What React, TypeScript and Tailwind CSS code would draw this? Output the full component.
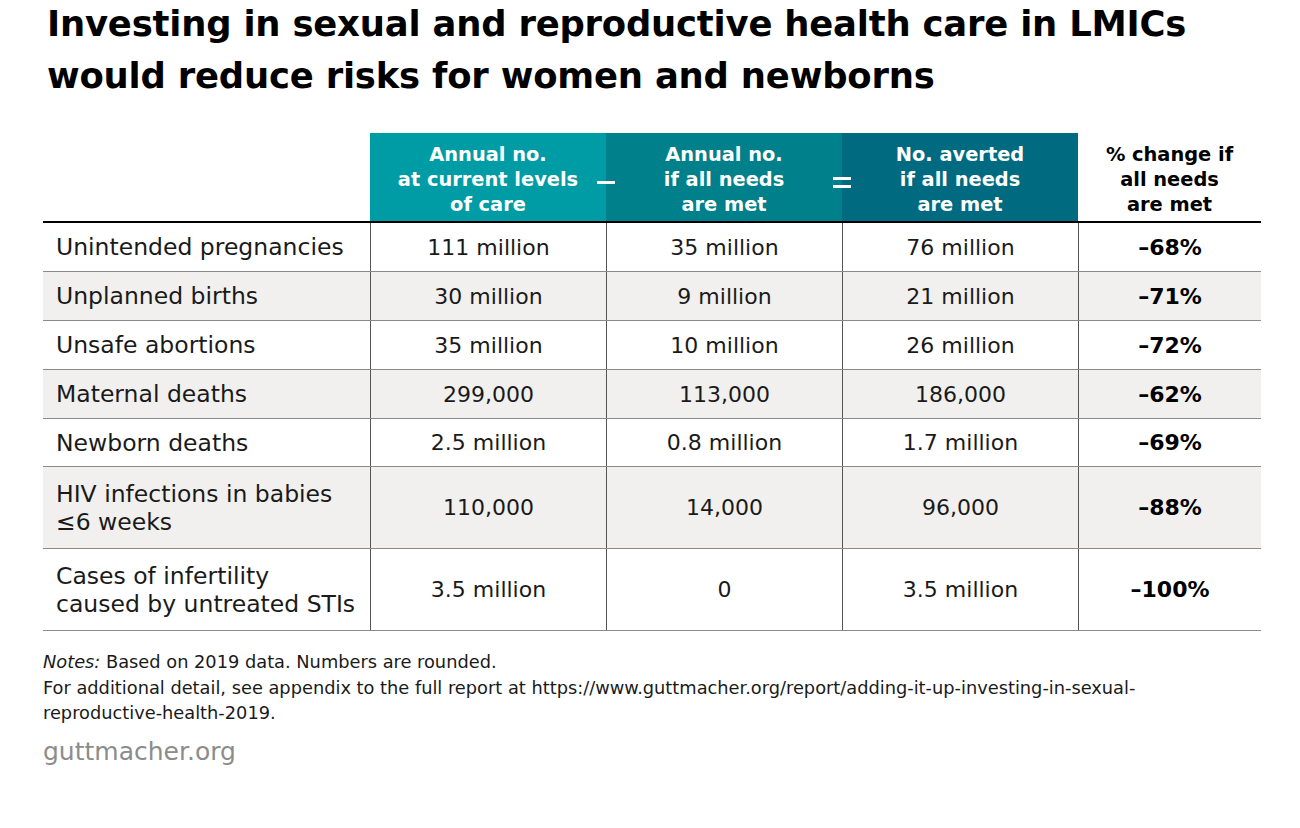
import React from "react";

const rows: { label: React.ReactNode; a: string; b: string; c: string; d: string; h: string }[] = [
  { label: "Unintended pregnancies", a: "111 million", b: "35 million", c: "76 million", d: "–68%", h: "h-[49px]" },
  { label: "Unplanned births", a: "30 million", b: "9 million", c: "21 million", d: "–71%", h: "h-[49px]" },
  { label: "Unsafe abortions", a: "35 million", b: "10 million", c: "26 million", d: "–72%", h: "h-[49px]" },
  { label: "Maternal deaths", a: "299,000", b: "113,000", c: "186,000", d: "–62%", h: "h-[49px]" },
  { label: "Newborn deaths", a: "2.5 million", b: "0.8 million", c: "1.7 million", d: "–69%", h: "h-[48px]" },
  { label: <>HIV infections in babies<br />≤6 weeks</>, a: "110,000", b: "14,000", c: "96,000", d: "–88%", h: "h-[82px]" },
  { label: <>Cases of infertility<br />caused by untreated STIs</>, a: "3.5 million", b: "0", c: "3.5 million", d: "–100%", h: "h-[82px]" },
];

export default function App() {
  return (
    <div className="w-[1300px] h-[828px] bg-white text-black" style={{ fontFamily: '"DejaVu Sans", sans-serif' }}>
      <div className="pl-[47px] -mt-[2px]">
        <h1 className="text-[35.4px] leading-[52px] font-bold tracking-[-0.2px]">
          Investing in sexual and reproductive health care in LMICs<br />
          would reduce risks for women and newborns
        </h1>
      </div>
      <div className="ml-[43px] mt-[31px] w-[1218px]">
        <div className="grid grid-cols-[327px_236px_236px_236px_183px] h-[90px] border-b-2 border-black">
          <div />
          <div className="relative bg-[#009ca6] text-white font-bold text-[19.4px] leading-[25px] flex items-center justify-center text-center pt-[5px]">
            <span>Annual no.<br />at current levels<br />of care</span>
            <span className="absolute right-[-9px] top-[48px] w-[18px] h-[3px] bg-white z-10" />
          </div>
          <div className="relative bg-[#00808a] text-white font-bold text-[19.4px] leading-[25px] flex items-center justify-center text-center pt-[5px]">
            <span>Annual no.<br />if all needs<br />are met</span>
            <span className="absolute right-[-9px] top-[44px] w-[18px] h-[3px] bg-white z-10" />
            <span className="absolute right-[-9px] top-[52px] w-[18px] h-[3px] bg-white z-10" />
          </div>
          <div className="bg-[#006b80] text-white font-bold text-[19.4px] leading-[25px] flex items-center justify-center text-center pt-[5px]">
            <span>No. averted<br />if all needs<br />are met</span>
          </div>
          <div className="font-bold text-[19.4px] leading-[25px] flex items-center justify-center text-center pt-[5px]">
            <span>% change if<br />all needs<br />are met</span>
          </div>
        </div>
        {rows.map((r, i) => (
          <div
            key={i}
            className={`grid grid-cols-[327px_236px_236px_236px_183px] border-b border-[#8a8a8a] ${r.h} ${i % 2 === 1 ? "bg-[#f1f0ee]" : "bg-white"}`}
          >
            <div className="flex items-center pl-[13px] text-[23.5px] leading-[28px] text-[#1a1a1a]">
              <span>{r.label}</span>
            </div>
            <div className="flex items-center justify-center border-l border-[#555] text-[22px] text-[#1a1a1a]">{r.a}</div>
            <div className="flex items-center justify-center border-l border-[#555] text-[22px] text-[#1a1a1a]">{r.b}</div>
            <div className="flex items-center justify-center border-l border-[#555] text-[22px] text-[#1a1a1a]">{r.c}</div>
            <div className="flex items-center justify-center border-l border-[#555] text-[22px] font-bold">{r.d}</div>
          </div>
        ))}
      </div>
      <div className="pl-[43px] pt-[18px] text-[17.8px] leading-[25.5px] text-[#1a1a1a]">
        <div><i>Notes:</i> Based on 2019 data. Numbers are rounded.</div>
        <div>For additional detail, see appendix to the full report at https://www.guttmacher.org/report/adding-it-up-investing-in-sexual-<br />reproductive-health-2019.</div>
        <div className="mt-[10px] text-[25px] leading-[32px] text-[#8c8c8c]">guttmacher.org</div>
      </div>
    </div>
  );
}
